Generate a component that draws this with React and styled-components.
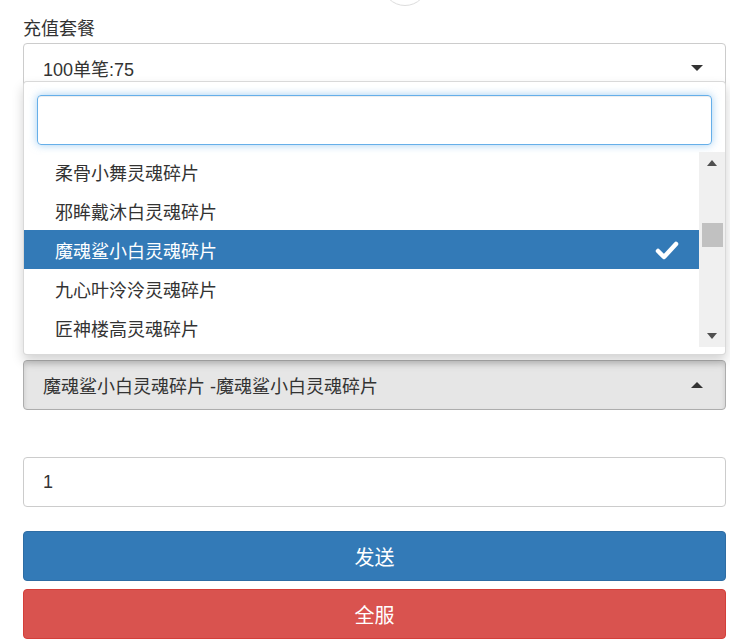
import styled, { createGlobalStyle } from 'styled-components'

const Global = createGlobalStyle`
  html, body { margin: 0; background: #fff; }
  body { font-family: "Liberation Sans", "Noto Sans CJK SC", sans-serif; color: #333; }
`

const Page = styled.div`
  width: 703px;
  padding: 16px 0 0 23px;
  position: relative;
`

const TopCircle = styled.div`
  position: absolute;
  left: 382px;
  top: -40px;
  width: 44px;
  height: 44px;
  border-radius: 50%;
  border: 1px solid #ddd;
  background: #fff;
`

const Label = styled.div`
  font-size: 18px;
  line-height: 27px;
  height: 27px;
`

const Group = styled.div`
  position: relative;
  display: flex;
  flex-direction: column;
`

const Select = styled.div`
  height: 48px;
  border: 1px solid ${p => (p.open ? '#adadad' : '#ccc')};
  border-radius: 4px;
  background: ${p => (p.open ? '#e6e6e6' : '#fff')};
  box-shadow: ${p => (p.open ? 'inset 0 3px 5px rgba(0,0,0,.125)' : 'none')};
  display: flex;
  align-items: center;
  justify-content: space-between;
  padding: 0 22px 0 19px;
  font-size: 18px;
  color: #333;
`

const Caret = styled.span`
  width: 0;
  height: 0;
  border-left: 6px solid transparent;
  border-right: 6px solid transparent;
  ${p => (p.up ? 'border-bottom: 6px solid #333;' : 'border-top: 6px solid #333;')}
`

const Hidden = styled.div`
  height: 267px;
  display: flex;
  flex-direction: column;
  gap: 20px;
  padding-top: 24px;
  box-sizing: border-box;
`

const DarkBlock = styled.div`
  height: 44px;
  background: #204d74;
  border-radius: 4px;
`

const Dropdown = styled.div`
  position: absolute;
  top: 38px;
  left: 0;
  right: 0;
  background: #fff;
  border: 1px solid rgba(0,0,0,.15);
  border-radius: 4px;
  box-shadow: 0 6px 12px rgba(0,0,0,.175);
  padding-top: 13px;
  height: 274px;
  box-sizing: border-box;
  z-index: 2;
`

const Search = styled.div`
  margin: 0 13px 7px 13px;
  height: 50px;
  border: 1px solid #66afe9;
  border-radius: 4px;
  box-shadow: inset 0 1px 1px rgba(0,0,0,.075), 0 0 8px rgba(102,175,233,.6);
  box-sizing: border-box;
`

const ListWrap = styled.div`
  display: flex;
`

const List = styled.div`
  flex: 1;
  display: flex;
  flex-direction: column;
`

const Option = styled.div`
  height: 39px;
  display: flex;
  align-items: center;
  justify-content: space-between;
  padding: 0 20px 0 31px;
  font-size: 18px;
  color: ${p => (p.active ? '#fff' : '#333')};
  background: ${p => (p.active ? '#337ab7' : 'transparent')};
`

const Scrollbar = styled.div`
  width: 26px;
  height: 195px;
  background: #f0f0f0;
  position: relative;
  display: flex;
  flex-direction: column;
  justify-content: space-between;
  align-items: center;
  padding: 8px 0;
  box-sizing: border-box;
`

const Thumb = styled.div`
  position: absolute;
  top: 71px;
  left: 3px;
  width: 21px;
  height: 24px;
  background: #c1c1c1;
`

const SmallArrow = styled.span`
  width: 0;
  height: 0;
  border-left: 5px solid transparent;
  border-right: 5px solid transparent;
  ${p => (p.up ? 'border-bottom: 6px solid #505050;' : 'border-top: 6px solid #505050;')}
`

const Input = styled.div`
  margin-top: 47px;
  height: 48px;
  border: 1px solid #ccc;
  border-radius: 4px;
  display: flex;
  align-items: center;
  padding-left: 19px;
  font-size: 18px;
`

const Button = styled.div`
  margin-top: ${p => p.gap}px;
  height: 48px;
  border: 1px solid ${p => p.border};
  background: ${p => p.bg};
  color: #fff;
  border-radius: 4px;
  display: flex;
  align-items: center;
  justify-content: center;
  font-size: 20px;
`

const items = ['柔骨小舞灵魂碎片', '邪眸戴沐白灵魂碎片', '魔魂鲨小白灵魂碎片', '九心叶泠泠灵魂碎片', '匠神楼高灵魂碎片']

export default function App() {
  return (
    <Page>
      <Global />
      <TopCircle />
      <Label>充值套餐</Label>
      <Group>
        <Select>100单笔:75<Caret /></Select>
        <Hidden>
          <DarkBlock />
        </Hidden>
        <Dropdown>
          <Search />
          <ListWrap>
            <List>
              {items.map((t, i) => (
                <Option key={t} active={i === 2}>
                  {t}
                  {i === 2 && (
                    <svg width="24" height="20" viewBox="0 0 24 20">
                      <path d="M3 11 L9 17 L21 4" fill="none" stroke="#fff" strokeWidth="4.5" strokeLinecap="round" strokeLinejoin="round" />
                    </svg>
                  )}
                </Option>
              ))}
            </List>
            <Scrollbar>
              <SmallArrow up />
              <Thumb />
              <SmallArrow />
            </Scrollbar>
          </ListWrap>
        </Dropdown>
        <Select open>魔魂鲨小白灵魂碎片 -魔魂鲨小白灵魂碎片<Caret up /></Select>
      </Group>
      <Input>1</Input>
      <Button gap={24} bg="#337ab7" border="#2e6da4">发送</Button>
      <Button gap={8} bg="#d9534f" border="#d43f3a">全服</Button>
    </Page>
  )
}
